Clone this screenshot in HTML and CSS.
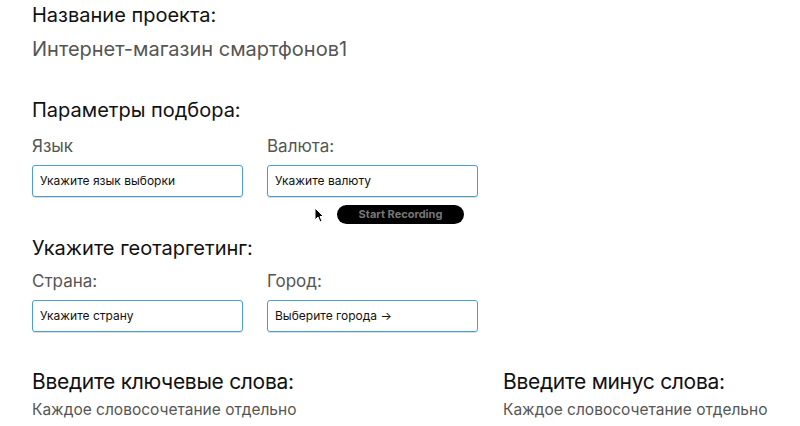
FILE: index.html
```html
<!DOCTYPE html>
<html lang="ru">
<head>
<meta charset="utf-8">
<link rel="stylesheet" href="styles.css">
</head>
<body>
<main class="page">
  <h2 class="title">Название проекта:</h2>
  <p class="project">Интернет-магазин смартфонов1</p>

  <h2 class="title section">Параметры подбора:</h2>
  <div class="row">
    <div class="field">
      <label class="label">Язык</label>
      <div class="input">Укажите язык выборки</div>
    </div>
    <div class="field">
      <label class="label">Валюта:</label>
      <div class="input">Укажите валюту</div>
    </div>
  </div>
  <div class="rec-row">
    <svg class="cursor" width="10" height="16" viewBox="0 0 10 16"><path d="M1 1 L1 13 L4 10 L6 15 L8 14 L6 9.5 L9.5 9.5 Z" fill="#000" stroke="#fff" stroke-width="1"/></svg>
    <div class="rec">Start Recording</div>
  </div>

  <h2 class="title geo">Укажите геотаргетинг:</h2>
  <div class="row row-geo">
    <div class="field">
      <label class="label">Страна:</label>
      <div class="input">Укажите страну</div>
    </div>
    <div class="field">
      <label class="label">Город:</label>
      <div class="input">Выберите города &#x2192;</div>
    </div>
  </div>

  <div class="keywords">
    <div class="kw">
      <h2 class="title kw-title">Введите ключевые слова:</h2>
      <p class="hint">Каждое словосочетание отдельно</p>
    </div>
    <div class="kw">
      <h2 class="title kw-title">Введите минус слова:</h2>
      <p class="hint">Каждое словосочетание отдельно</p>
    </div>
  </div>
</main>
</body>
</html>
```
FILE: styles.css
```css
html, body { margin: 0; padding: 0; background: #fff; }
body { font-family: "Inter", "Roboto", sans-serif; color: #111; width: 800px; height: 426px; overflow: hidden; }
.page { padding: 3px 0 0 32px; }
.title { margin: 0; font-size: 20px; font-weight: 400; line-height: 24px; color: #111; }
.project { margin: 10px 0 0; font-size: 20px; line-height: 24px; color: #555; }
.section { margin-top: 37px; }
.row { display: flex; gap: 24px; margin-top: 14px; }
.row-geo { margin-top: 11px; }
.field { width: 211px; display: flex; flex-direction: column; }
.label { font-size: 17px; line-height: 20px; color: #555; }
.input { margin-top: 9px; height: 30px; border: 1px solid #4b9fcf; border-radius: 3px; box-sizing: content-box; padding: 0 7px; font-size: 12px; line-height: 30px; color: #111; box-shadow: 0 1px 1px rgba(0,0,0,0.15); }
.rec-row { display: flex; align-items: center; margin: 7px 0 0 282px; height: 20px; }
.cursor { margin-top: 2px; }
.rec { margin-left: 13px; width: 127px; height: 19px; border-radius: 10px; background: #000; color: #777; font-size: 11px; font-weight: 700; text-align: center; line-height: 19px; }
.geo { margin-top: 12px; }
.keywords { display: grid; grid-template-columns: 471px 1fr; margin-top: 38px; }
.kw { min-width: 0; }
.kw-title { font-size: 21px; letter-spacing: -0.3px; white-space: nowrap; }
.hint { margin: 7px 0 0; font-size: 15.5px; line-height: 18px; color: #555; white-space: nowrap; }
```
